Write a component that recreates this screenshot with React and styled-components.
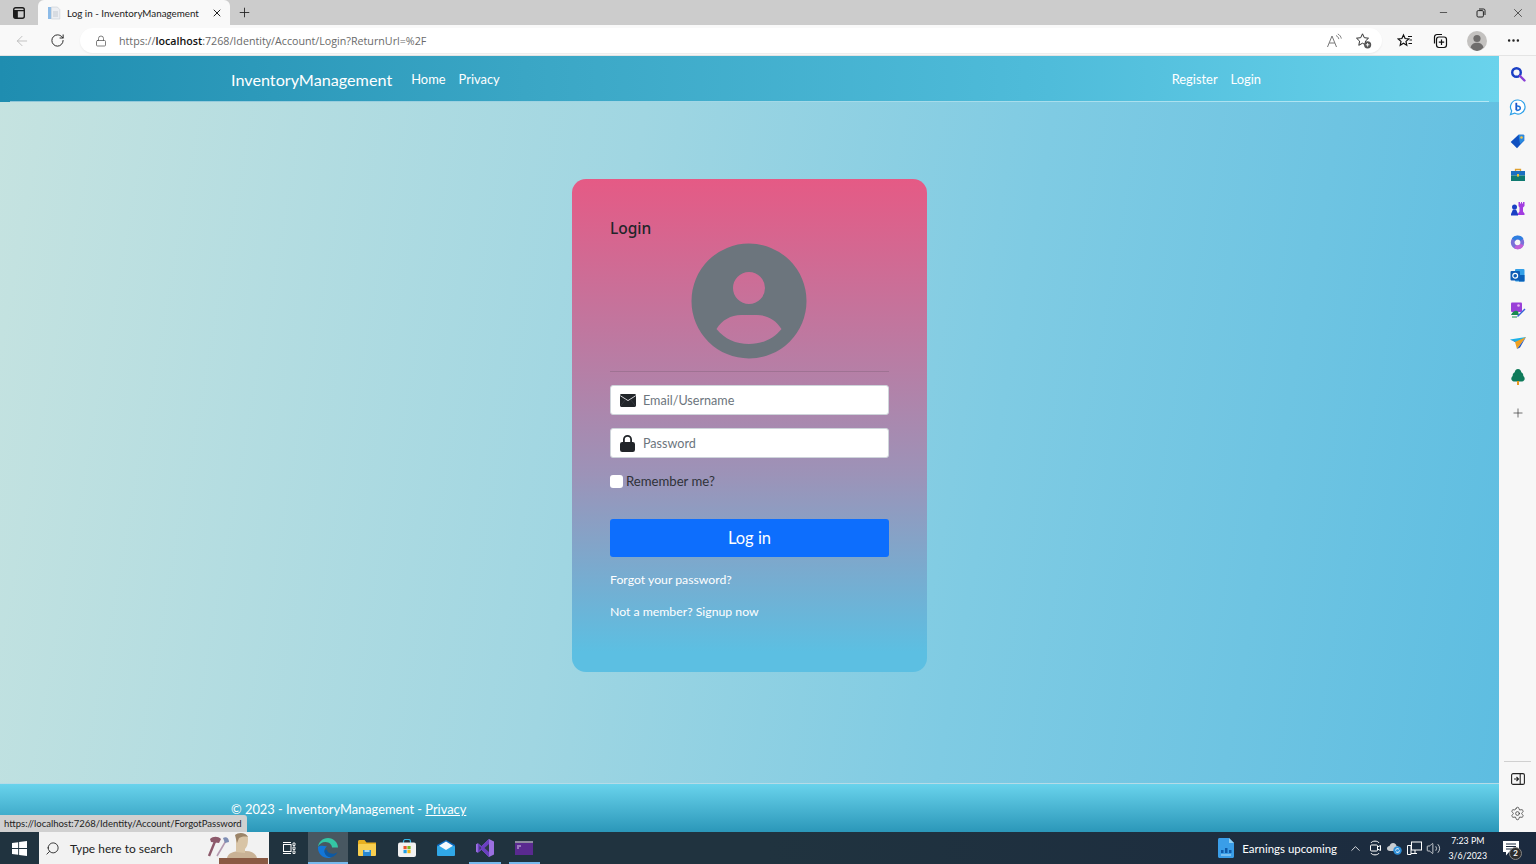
import React from "react";
import styled, { createGlobalStyle } from "styled-components";
import {
  ArrowLeft,
  RotateCw,
  Lock,
  X,
  Plus,
  Minus,
  Search,
  Settings,
  Ellipsis,
  ChevronUp,
  Volume2,
} from "lucide-react";

const GlobalStyle = createGlobalStyle`
  html, body { margin: 0; padding: 0; height: 100%; overflow: hidden; }
  body { font-family: Lato, "Open Sans", sans-serif; color: #212529; }
  * { box-sizing: border-box; }
`;

/* ---------- Drawings ---------- */

const TabActionsIcon = () => (
  <svg width="14" height="14" viewBox="0 0 14 14" fill="none" stroke="#1c1c1c" strokeWidth="1.4">
    <rect x="1.7" y="1.7" width="10.6" height="10.6" rx="2" />
    <path d="M2 4.6h10M5 4.6v7.4" />
    <path d="M2.4 5h2.4v6.6H2.4z" fill="#1c1c1c" />
  </svg>
);

const PageIcon = () => (
  <svg width="14" height="14" viewBox="0 0 14 14">
    <rect x="1" y="1" width="3.4" height="12" fill="#8cbbe8" />
    <path d="M4.4 1h6l2.4 2.6V13H4.4z" fill="#eceef2" stroke="#c8ccd4" strokeWidth=".6" />
    <path d="M6 6h5M6 8h5M6 10h5" stroke="#b9bec8" strokeWidth=".8" />
  </svg>
);

const RestoreIcon = () => (
  <svg width="10" height="10" viewBox="0 0 10 10" fill="none" stroke="#222" strokeWidth="1">
    <rect x="1" y="2.6" width="6.4" height="6.4" rx="1.2" />
    <path d="M3 1h4.6A1.4 1.4 0 0 1 9 2.4V7" />
  </svg>
);

const ReadAloudIcon = () => (
  <svg width="16" height="16" viewBox="0 0 16 16" fill="none" stroke="#777" strokeWidth="1">
    <path d="M1.500 14 6 3l4.500 11M3.200 10h5.600" />
    <path d="M10 2.500c1.600.8 2.500 2 2.800 3.600M11.800 1c2 1 3.200 2.600 3.500 4.600" strokeWidth=".9" />
  </svg>
);

const FavoriteAddIcon = () => (
  <svg width="17" height="17" viewBox="0 0 17 17" fill="none">
    <path d="M7.500 1.800 9.300 5.700l4.200.5-3.100 2.900.8 4.200-3.700-2.100-3.700 2.100.8-4.200-3.100-2.900 4.200-.5z" stroke="#333" strokeWidth="1" />
    <circle cx="12.600" cy="12.800" r="3.600" fill="#555" />
    <path d="M12.600 11v3.600M10.800 12.800h3.600" stroke="#fff" strokeWidth=".9" />
  </svg>
);

const FavoritesIcon = () => (
  <svg width="16" height="16" viewBox="0 0 16 16" fill="none" stroke="#111" strokeWidth="1.200">
    <path d="M6.500 2 8.100 5.500l3.700.4-2.800 2.500.8 3.800-3.300-1.900-3.300 1.900.8-3.800L1.200 5.900l3.700-.4z" />
    <path d="M11 3.500h4M12.500 7h2.500M11.500 10.500h3.500" />
  </svg>
);

const CollectionsIcon = () => (
  <svg width="16" height="16" viewBox="0 0 16 16" fill="none" stroke="#111" strokeWidth="1.200">
    <path d="M2.500 10.500V4A2.500 2.500 0 0 1 5 1.500h5" />
    <rect x="4.500" y="4" width="10" height="10.500" rx="2.400" />
    <path d="M9.500 6.500v5.500M6.800 9.200h5.400" />
  </svg>
);

const ProfileIcon = () => (
  <svg width="20" height="20" viewBox="0 0 20 20">
    <circle cx="10" cy="10" r="10" fill="#c4c2c0" />
    <circle cx="10" cy="7.500" r="3.600" fill="#6f6d6c" />
    <path d="M3.500 16.500C4.500 13 7 11.800 10 11.800s5.500 1.200 6.500 4.700A10 10 0 0 1 10 20a10 10 0 0 1-6.500-3.500z" fill="#6f6d6c" />
  </svg>
);

const AvatarIcon = () => (
  <svg width="116" height="116" viewBox="0 0 116 116">
    <path
      fillRule="evenodd"
      fill="#6c757d"
      d="M58 .5a57.500 57.500 0 1 0 0 115a57.500 57.500 0 1 0 0-115z
         M58 29a16 16 0 1 1 0 32a16 16 0 1 1 0-32z
         M25.500 86C31 77 40 72 50 72h16c10 0 19 5 24.500 14c-8 10-19.500 15-32.500 15s-24.500-5-32.500-15z"
    />
  </svg>
);

const EnvelopeIcon = () => (
  <svg width="16" height="13" viewBox="0 0 16 13">
    <rect width="16" height="13" rx="1.400" fill="#212529" />
    <path d="M.3 1.700 8 6.600l7.700-4.900" fill="none" stroke="#e8e4ea" strokeWidth=".9" />
    <path d="M.3 12.300 5.600 5.300M15.700 12.300 10.400 5.300" fill="none" stroke="#4a4d55" strokeWidth=".5" />
  </svg>
);

const LockIcon = () => (
  <svg width="15" height="17" viewBox="0 0 15 17">
    <path fillRule="evenodd" fill="#212529" d="M7.500 0A4.500 4.500 0 0 0 3 4.500V7h-.8A2.200 2.200 0 0 0 0 9.200v5.600A2.200 2.200 0 0 0 2.200 17h10.600a2.200 2.200 0 0 0 2.200-2.200V9.200A2.200 2.200 0 0 0 12.800 7H12V4.500A4.500 4.500 0 0 0 7.500 0zm0 1.800A2.700 2.700 0 0 1 10.200 4.500V7H4.800V4.500A2.700 2.700 0 0 1 7.500 1.800z" />
  </svg>
);

/* Edge sidebar apps */
const SideSearch = () => (
  <svg width="16" height="16" viewBox="0 0 16 16" fill="none">
    <circle cx="6.500" cy="6.500" r="4.300" stroke="#1a3fc4" strokeWidth="2.400" />
    <path d="m10 10 4.500 4.500" stroke="#8a3fd6" strokeWidth="2.400" strokeLinecap="round" />
  </svg>
);

const SideBing = () => (
  <svg width="17" height="17" viewBox="0 0 17 17" fill="none">
    <path d="M9 1a7 7 0 1 1-3.400 13.100L1.500 15.500l1.200-3.600A7 7 0 0 1 9 1z" stroke="#2b9fe8" strokeWidth="1.200" fill="#fff" />
    <path d="M7.300 3.800v7.400" stroke="#1a50c8" strokeWidth="1.800" />
    <path d="M7.300 7.200c2.800-.4 4 .6 4 1.800 0 1.400-1.800 2.400-4 2.400" stroke="#1a70d8" strokeWidth="1.500" />
  </svg>
);

const SideTag = () => (
  <svg width="15" height="15" viewBox="0 0 15 15">
    <path d="M8.500.8h5c.4 0 .7.300.7.700v5L7 14.300.7 8z" fill="#1050c0" />
    <path d="M8.500.8h5c.4 0 .7.300.7.700v5L10 10z" fill="#2a8ae0" />
    <circle cx="11.500" cy="3.500" r="1.300" fill="#f6c244" />
  </svg>
);

const SideBag = () => (
  <svg width="14" height="13" viewBox="0 0 14 13">
    <path d="M4.500 3V1.500h5V3" fill="none" stroke="#e0a030" strokeWidth="1.300" />
    <rect y="3" width="14" height="4.500" fill="#1b6fc0" />
    <rect y="7.500" width="14" height="5.500" fill="#0f7a70" />
    <rect x="6" y="6" width="2" height="2.600" fill="#f2c230" />
  </svg>
);

const SideChess = () => (
  <svg width="15" height="15" viewBox="0 0 15 15">
    <path d="M8.500 1h1.500v1.500h1V1h1v1.500h1V1H14.500v4L13 6.500v4l1.500 2V14H8v-1.500l1.500-2v-4L8.500 5z" fill="#a23de0" />
    <circle cx="4.500" cy="6" r="2.500" fill="#1a3fc4" />
    <path d="M3 8.500h3l2 4.500v1.500H1V13z" fill="#1a3fc4" />
  </svg>
);

const SideOffice = () => (
  <svg width="15" height="15" viewBox="0 0 15 15" fill="none">
    <circle cx="7.500" cy="7.500" r="4.800" stroke="#7a70d8" strokeWidth="3.800" />
    <path d="M3.500 4.800a4.800 4.800 0 0 1 8.300 0" stroke="#2f7fe0" strokeWidth="3.800" />
    <path d="M12 9.500a4.800 4.800 0 0 1-6.800 2.200" stroke="#c060d8" strokeWidth="3.800" />
    <circle cx="7.500" cy="7.500" r="1.800" fill="#f7f7f7" />
  </svg>
);

const SideOutlook = () => (
  <svg width="15" height="15" viewBox="0 0 15 15">
    <rect x="5" y="1" width="9.500" height="12.500" rx="1" fill="#33a0e8" />
    <rect x="9" y="7" width="5.500" height="6.500" fill="#0a60b8" />
    <rect x=".5" y="3" width="9.500" height="9.500" rx="1" fill="#0f5cb5" />
    <circle cx="5.200" cy="7.700" r="2.400" fill="none" stroke="#fff" strokeWidth="1.200" />
  </svg>
);

const SideDesigner = () => (
  <svg width="16" height="16" viewBox="0 0 16 16">
    <rect x="1" y="0.500" width="11" height="9.500" rx="1" fill="#9a3fd8" />
    <circle cx="8.500" cy="3.500" r="1.300" fill="#e8b8f0" />
    <path d="M1 13c2-4 5-5 7-3.500l1 3.500z" fill="#1a8a50" />
    <path d="m7 14 7.500-7.500 1 1L8 15z" fill="#3460d8" />
    <path d="M2 15h5" stroke="#1a8a50" strokeWidth="1" />
  </svg>
);

const SideSend = () => (
  <svg width="16" height="13" viewBox="0 0 16 13">
    <path d="M0 2.500 16 0 9 6z" fill="#1cb2e8" />
    <path d="M16 0 5 5l2 7z" fill="#f0a020" />
    <path d="M16 0 7 12l3-1.500z" fill="#1a50c0" />
    <path d="M0 2.500 5 5l1-.5z" fill="#1070b8" />
  </svg>
);

const SideTree = () => (
  <svg width="14" height="16" viewBox="0 0 14 16">
    <path d="M7 0c2 0 3 1.500 3.300 3.200C12 4 12.500 5.500 12.300 7c1.200 1 1.700 2.500 1.200 3.700-.6 1.300-2 1.800-3.500 1.800H4c-1.500 0-2.900-.5-3.500-1.800C0 9.500.5 8 1.700 7 1.500 5.500 2 4 3.700 3.200 4 1.500 5 0 7 0z" fill="#0f7a5a" />
    <rect x="6" y="12" width="2" height="4" fill="#e89a20" />
  </svg>
);

const SplitIcon = () => (
  <svg width="14" height="12" viewBox="0 0 14 12" fill="none" stroke="#222" strokeWidth="1.100">
    <rect x=".6" y=".6" width="12.800" height="10.800" rx="1.500" />
    <path d="M9.200 .6v10.800M3 6h4M5.500 4l2 2-2 2" />
  </svg>
);

/* Taskbar */
const WindowsLogo = () => (
  <svg width="15" height="15" viewBox="0 0 15 15" fill="#fff">
    <path d="M0 2.100 6.200 1.200v5.900H0zM7.100 1.100 15 0v7.100H7.100zM0 7.900h6.200v5.900L0 12.900zM7.100 7.900H15V15l-7.900-1.100z" />
  </svg>
);

const StatueArt = () => (
  <svg width="62" height="32" viewBox="0 0 62 32">
    <path d="M2 24 9 7" stroke="#8d5a6b" strokeWidth="2.400" />
    <path d="M3 7c3-3 8-3 11 0l-2 4-8-1z" fill="#8d5a6b" />
    <path d="M10 24 20 7" stroke="#b49ab0" strokeWidth="1.600" />
    <path d="M16 6c3-2 6 0 6 4l-4 1z" fill="#7e8eb4" />
    <rect x="12" y="26" width="49" height="6" fill="#8a5a44" />
    <path d="M20 26c1-5 7-7 13-7h6c6 0 10 3 11 7z" fill="#c9b296" />
    <path d="M29 20V6c0-3 2-4 6-4s6 1 6 5c0 5-1 8-3 10v4z" fill="#d8c4a6" />
    <path d="M28 3c3-3 11-3 13 2-4-1-7 0-9 1l-2 5z" fill="#9b8468" />
  </svg>
);

const TaskViewIcon = () => (
  <svg width="14" height="14" viewBox="0 0 14 14" fill="none" stroke="#fff" strokeWidth="1">
    <path d="M1 1.500h8M1 12.500h8" />
    <rect x="1.500" y="3.500" width="7.500" height="7" />
    <path d="M11 2v2.500h2V2zM11 6v2.500h2V6zM11 10v2.500h2V10z" strokeWidth=".9" />
  </svg>
);

const EdgeIcon = () => (
  <svg width="20" height="20" viewBox="0 0 20 20">
    <path d="M10 0C4.500 0 .5 4 0 9c1-3 4-5 7.500-5C11.500 4 14 7 14 9.500h6C20 4.500 15.500 0 10 0z" fill="#34c6a4" />
    <path d="M0 9c-.5 6 4 11 10 11 1.500 0 3-.3 4-.8-4.500.5-7.500-3-7.500-6.200 0-2 1-3.500 2.500-4.500C5 7.500 1.500 7.500 0 9z" fill="#1276d8" />
    <path d="M6.500 13c0 3.500 3.500 7.500 8.500 5.700 2-1 3.500-2.500 4.500-4.700-2 2-5.500 2.200-8 1-2-1-2.500-2-2.500-3.500-1.500.3-2.500 1-2.500 1.500z" fill="#0c59a4" />
  </svg>
);

const ExplorerIcon = () => (
  <svg width="18" height="16" viewBox="0 0 18 16">
    <path d="M0 1.500C0 .7.700 0 1.500 0h5l2 2.500H18V5H0z" fill="#e8b020" />
    <rect y="4" width="18" height="12" rx="1" fill="#f8cf50" />
    <rect x="5" y="10" width="8" height="6" fill="#2a88d0" />
    <rect x="6.500" y="10" width="5" height="2" fill="#a8d8f0" />
  </svg>
);

const StoreIcon = () => (
  <svg width="18" height="18" viewBox="0 0 18 18">
    <path d="M5.500 4V2.500a2 2 0 0 1 2-2h3a2 2 0 0 1 2 2V4" fill="none" stroke="#35b8e8" strokeWidth="1.200" />
    <rect y="3.500" width="18" height="14.500" rx="2" fill="#f2f2f2" />
    <rect x="5.500" y="7" width="3.200" height="3.200" fill="#e8542c" />
    <rect x="9.400" y="7" width="3.200" height="3.200" fill="#7ab820" />
    <rect x="5.500" y="11" width="3.200" height="3.200" fill="#20a0e8" />
    <rect x="9.400" y="11" width="3.200" height="3.200" fill="#f2b818" />
  </svg>
);

const MailIcon = () => (
  <svg width="18" height="16" viewBox="0 0 18 16">
    <path d="M0 5 9 0l9 5v2L9 11 0 7z" fill="#0c6cc0" />
    <rect y="6" width="18" height="10" rx="1" fill="#30a8e8" />
    <path d="M2 5.800 9 1.500l7 4.300-7 4.200z" fill="#f4f8fc" />
  </svg>
);

const VsIcon = () => (
  <svg width="18" height="18" viewBox="0 0 18 18">
    <path d="M13 0 18 2.500v13L13 18 5.500 10.800 1.800 13.800 0 12.800V5.200l1.800-1 3.700 3z" fill="#9a6fe0" />
    <path d="M13 0v18L5.500 10.800 1.800 13.800V4.200l3.700 3z" fill="#6a3fc0" />
    <path d="M13 5 8.500 9l4.500 4zM3.500 7v4L5 9z" fill="#2b3a44" />
  </svg>
);

const TerminalIcon = () => (
  <svg width="18" height="14" viewBox="0 0 18 14">
    <rect width="18" height="14" fill="#5a2a90" />
    <rect width="18" height="2" fill="#8d8aa0" />
    <path d="M2 5h4M2 7h2" stroke="#d9c8ec" strokeWidth="1" />
  </svg>
);

const NewsIcon = () => (
  <svg width="16" height="20" viewBox="0 0 16 20">
    <path d="M1.500 0H11l5 5v13.500c0 .8-.7 1.500-1.500 1.500h-13C.700 20 0 19.300 0 18.500v-17C0 .7.700 0 1.500 0z" fill="#3a9ee8" />
    <path d="M11 0l5 5h-5z" fill="#8fd0f4" />
    <path d="M3 12v3h2.500v-3zM7 10v5h2.500v-5zM11 12v3h2.500v-3z" fill="#0f5aa8" />
    <path d="M3 17h10" stroke="#b8e0f8" strokeWidth="1" />
  </svg>
);

const MeetIcon = () => (
  <svg width="13" height="16" viewBox="0 0 13 16" fill="none" stroke="#fff" strokeWidth="1">
    <path d="M2 3c1-2.500 7-2.500 8 0M2 13c1 2.500 7 2.500 8 0" />
    <rect x="1.500" y="5" width="7" height="6" rx="1" />
    <path d="m8.500 7 3-1.500v5l-3-1.500" />
  </svg>
);

const CloudSyncIcon = () => (
  <svg width="15" height="13" viewBox="0 0 15 13">
    <path d="M3 9C1 9 0 8 0 6.500S1.200 4 2.500 4C3 2 4.500 1 6 1c2 0 3.500 1.500 3.500 3H11v5z" fill="#c8ccd0" />
    <circle cx="10.500" cy="8.500" r="4.200" fill="#2f8fd8" />
    <path d="M8.500 8.500a2 2 0 0 1 3.500-1.200M12.500 8.500a2 2 0 0 1-3.500 1.200" stroke="#fff" strokeWidth=".9" fill="none" />
  </svg>
);

const NetworkIcon = () => (
  <svg width="15" height="15" viewBox="0 0 15 15" fill="none" stroke="#fff" strokeWidth="1">
    <rect x="4.500" y="1" width="10" height="8" />
    <path d="M.5 4.500h3.500v9H.5zM4 12.500h6M8 9v3.500" />
  </svg>
);

const MessageIcon = () => (
  <svg width="16" height="15" viewBox="0 0 16 15">
    <path d="M0 0h16v11H6l-3 3.500V11H0z" fill="#fff" />
    <path d="M3 3h10M3 5.500h10M3 8h7" stroke="#1b2a3f" strokeWidth="1" />
  </svg>
);

/* ---------- Browser chrome ---------- */

const Screen = styled.div`
  width: 1536px;
  height: 864px;
  display: flex;
  flex-direction: column;
  overflow: hidden;
  position: relative;
`;

const TitleBar = styled.div`
  height: 25px;
  flex: none;
  display: flex;
  align-items: flex-end;
  background: #cccccc;
  padding-left: 12px;
`;

const TabActions = styled.div`
  width: 14px;
  height: 25px;
  margin-right: 12px;
  display: flex;
  align-items: center;
`;

const Tab = styled.div`
  width: 192px;
  height: 25px;
  display: flex;
  align-items: center;
  padding: 0 7px 0 9px;
  background: #f9f9f9;
  border-radius: 6px 6px 0 0;
`;

const TabTitle = styled.span`
  flex: 1;
  margin-left: 6px;
  font-size: 9.800px;
  color: #222;
  white-space: nowrap;
`;

const NewTab = styled.div`
  width: 28px;
  height: 25px;
  display: flex;
  align-items: center;
  justify-content: center;
  color: #222;
`;

const WindowControls = styled.div`
  margin-left: auto;
  height: 25px;
  display: flex;
  align-items: center;
`;

const WindowButton = styled.div`
  width: 37px;
  display: flex;
  justify-content: center;
  align-items: center;
  color: #222;
`;

const Toolbar = styled.div`
  height: 31px;
  flex: none;
  display: flex;
  align-items: center;
  background: #f9f9f9;
  border-bottom: 1px solid #e4e4e4;
  padding: 1px 0 0 13px;
`;

const NavIcon = styled.div`
  width: 18px;
  display: flex;
  justify-content: center;
  color: ${(p) => (p.$off ? "#b8b8b8" : "#2a2a2a")};
  margin-right: ${(p) => p.$gap || 0}px;
`;

const AddressBar = styled.div`
  width: 1302px;
  height: 25px;
  display: flex;
  align-items: center;
  background: #fff;
  border-radius: 13px;
  padding: 0 10px 0 15px;
  box-shadow: 0 1px 2px rgba(0, 0, 0, 0.06);
`;

const Url = styled.div`
  flex: 1;
  margin-left: 12px;
  font-size: 10.700px;
  color: #6a6a6a;
  font-family: "Open Sans", sans-serif;
  b {
    color: #111;
    font-weight: 600;
  }
`;

const AddressTools = styled.div`
  display: flex;
  align-items: center;
  gap: 13px;
`;

const ToolbarRight = styled.div`
  display: flex;
  flex: 1;
  align-items: center;
  justify-content: space-between;
  padding: 0 15px 0 15px;
`;

/* ---------- Page ---------- */

const Main = styled.div`
  flex: 1;
  min-height: 0;
  display: flex;
`;

const Page = styled.div`
  width: 1499px;
  display: flex;
  flex-direction: column;
  background: linear-gradient(100deg, #c6e3e0 0%, #a0d6e2 40%, #7fcbe3 65%, #5dbde1 100%);
`;

const NavBar = styled.nav`
  height: 46px;
  flex: none;
  display: flex;
  align-items: center;
  position: relative;
  padding: 0 238px 0 231px;
  color: #fff;
  background: linear-gradient(90deg, #1f8db0 0%, #3aa6c5 35%, #4fbcda 70%, #6ad3ec 100%);
  &::after {
    content: "";
    position: absolute;
    left: 10px;
    right: 10px;
    bottom: 0;
    height: 1px;
    background: rgba(255, 255, 255, 0.5);
  }
`;

const Brand = styled.a`
  font-size: 16.200px;
  margin-right: 19px;
`;

const NavLink = styled.a`
  font-size: 12.900px;
  margin-right: 13px;
  &:last-child {
    margin-right: 0;
  }
`;

const NavSpacer = styled.div`
  flex: 1;
`;

const Content = styled.main`
  flex: 1;
  min-height: 0;
  display: flex;
  justify-content: center;
  padding: 77px 0 0 0;
`;

const Card = styled.section`
  width: 355px;
  height: 493px;
  padding: 38px 38px 0;
  border-radius: 14px;
  background: linear-gradient(180deg, #e55a85 0%, #9c93b8 60%, #5cbfe2 96%);
  display: flex;
  flex-direction: column;
`;

const CardTitle = styled.h1`
  margin: 0;
  font-family: "Noto Sans", sans-serif;
  font-size: 15.500px;
  line-height: 22px;
  font-weight: 500;
  color: #212529;
`;

const AvatarWrap = styled.div`
  display: flex;
  justify-content: center;
  margin-top: 4px;
  height: 116px;
  padding-right: 1px;
`;

const Divider = styled.hr`
  width: 100%;
  margin: 12px 0 13px;
  border: 0;
  border-top: 1px solid rgba(33, 37, 41, 0.15);
`;

const InputBox = styled.label`
  height: 30px;
  display: flex;
  align-items: center;
  background: #fff;
  border: 1px solid #ced4da;
  border-radius: 3px;
  padding-left: 9px;
  margin-bottom: 13px;
`;

const InputIcon = styled.span`
  width: 16px;
  display: flex;
  justify-content: flex-start;
  margin-right: 7px;
`;

const Placeholder = styled.span`
  font-size: 12.600px;
  color: #6c757d;
`;

const RememberRow = styled.div`
  display: flex;
  align-items: center;
  height: 18px;
  margin-top: 1px;
`;

const CheckBox = styled.span`
  width: 13px;
  height: 13px;
  background: #fff;
  border: 1px solid rgba(255, 255, 255, 0.5);
  border-radius: 3px;
  margin-right: 3px;
`;

const RememberLabel = styled.span`
  font-size: 13.150px;
  color: #2f3238;
`;

const LoginButton = styled.button`
  height: 38px;
  margin-top: 29px;
  border: 0;
  border-radius: 3px;
  background: #0d6efd;
  color: #fff;
  font-family: inherit;
  font-size: 16.500px;
  padding-top: 1px;
`;

const CardLink = styled.a`
  display: block;
  font-size: 12.250px;
  line-height: 18px;
  color: #fff;
  margin-top: 14px;
`;

const Footer = styled.footer`
  height: 49px;
  flex: none;
  padding: 16px 0 0 231px;
  border-top: 1px solid rgba(255, 255, 255, 0.65);
  background: linear-gradient(180deg, #69d3ec 0%, #2b97b9 100%);
  color: #fff;
  font-size: 12.850px;
  line-height: 18px;
  a {
    color: #fff;
    text-decoration: underline;
  }
`;

const StatusTip = styled.div`
  position: absolute;
  left: 0;
  bottom: 32px;
  height: 17px;
  padding: 0 5px 0 4px;
  background: #d0d0d0;
  border-radius: 0 3px 0 0;
  color: #222;
  font-size: 9.500px;
  line-height: 17px;
`;

/* ---------- Edge sidebar ---------- */

const SideBar = styled.aside`
  flex: 1;
  background: #f7f7f7;
  display: flex;
  flex-direction: column;
  padding-top: 1px;
`;

const SideItem = styled.div`
  height: 33.700px;
  flex: none;
  display: flex;
  align-items: center;
  justify-content: center;
  color: #333;
  margin-top: ${(p) => p.$top || 0}px;
`;

const SideBottom = styled.div`
  margin-top: auto;
  padding-bottom: 2px;
`;

const SideRule = styled.div`
  height: 1px;
  margin: 0 5px 1px;
  background: #d0d0d0;
`;

/* ---------- Taskbar ---------- */

const Taskbar = styled.div`
  height: 32px;
  flex: none;
  display: flex;
  align-items: center;
  background: linear-gradient(90deg, #20333f 0%, #20333f 50%, #1b2a3f 100%);
  color: #fff;
`;

const StartButton = styled.div`
  width: 39px;
  display: flex;
  justify-content: center;
`;

const SearchBox = styled.div`
  width: 230px;
  height: 32px;
  display: flex;
  align-items: center;
  background: #f2f2f2;
  padding-left: 6px;
  color: #222;
`;

const SearchText = styled.span`
  flex: 1;
  margin-left: 10px;
  font-size: 11.950px;
`;

const TaskApps = styled.div`
  display: flex;
  align-items: center;
`;

const TaskApp = styled.div`
  width: 39.300px;
  height: 32px;
  display: flex;
  align-items: center;
  justify-content: center;
  position: relative;
  background: ${(p) => (p.$active ? "rgba(255,255,255,0.18)" : "transparent")};
  ${(p) =>
    p.$running &&
    `&::after {
      content: "";
      position: absolute;
      left: ${p.$active ? 0 : 4}px;
      right: ${p.$active ? 0 : 4}px;
      bottom: 0;
      height: 2px;
      background: #76b9ed;
    }`}
`;

const Tray = styled.div`
  margin-left: auto;
  display: flex;
  align-items: center;
  padding-right: 6px;
`;

const NewsWidget = styled.div`
  display: flex;
  align-items: center;
  gap: 8px;
  margin-right: 9px;
  font-size: 11.450px;
`;

const TrayIcon = styled.div`
  width: 19.500px;
  display: flex;
  justify-content: center;
`;

const Clock = styled.div`
  width: 48.500px;
  text-align: center;
  font-size: 8.800px;
  line-height: 15px;
`;

const Notify = styled.div`
  width: 38px;
  height: 32px;
  display: flex;
  align-items: center;
  justify-content: center;
  position: relative;
`;

const NotifyBadge = styled.span`
  position: absolute;
  right: 8px;
  bottom: 4px;
  width: 13px;
  height: 13px;
  border-radius: 50%;
  background: #2d2d2d;
  border: 1px solid #888;
  font-size: 8px;
  line-height: 11px;
  text-align: center;
  font-weight: 700;
`;

const sideApps = [SideSearch, SideBing, SideTag, SideBag, SideChess, SideOffice, SideOutlook, SideDesigner, SideSend, SideTree];
const taskApps = [
  { Icon: TaskViewIcon },
  { Icon: EdgeIcon, active: true, running: true },
  { Icon: ExplorerIcon },
  { Icon: StoreIcon },
  { Icon: MailIcon },
  { Icon: VsIcon, running: true },
  { Icon: TerminalIcon, running: true },
];

const App = () => {
  return (
    <Screen>
      <GlobalStyle />
      <TitleBar>
        <TabActions>
          <TabActionsIcon />
        </TabActions>
        <Tab>
          <PageIcon />
          <TabTitle>Log in - InventoryManagement</TabTitle>
          <X size={12} color="#222" />
        </Tab>
        <NewTab>
          <Plus size={15} strokeWidth={1.4} />
        </NewTab>
        <WindowControls>
          <WindowButton>
            <Minus size={11} strokeWidth={1.5} />
          </WindowButton>
          <WindowButton>
            <RestoreIcon />
          </WindowButton>
          <WindowButton>
            <X size={14} strokeWidth={1.2} />
          </WindowButton>
        </WindowControls>
      </TitleBar>

      <Toolbar>
        <NavIcon $off $gap={17}>
          <ArrowLeft size={16} strokeWidth={1.3} />
        </NavIcon>
        <NavIcon $gap={14}>
          <RotateCw size={15} strokeWidth={1.6} />
        </NavIcon>
        <AddressBar>
          <Lock size={12} color="#555" strokeWidth={1.5} />
          <Url>
            https://<b>localhost</b>:7268/Identity/Account/Login?ReturnUrl=%2F
          </Url>
          <AddressTools>
            <ReadAloudIcon />
            <FavoriteAddIcon />
          </AddressTools>
        </AddressBar>
        <ToolbarRight>
          <FavoritesIcon />
          <CollectionsIcon />
          <ProfileIcon />
          <Ellipsis size={15} color="#222" />
        </ToolbarRight>
      </Toolbar>

      <Main>
        <Page>
          <NavBar>
            <Brand>InventoryManagement</Brand>
            <NavLink>Home</NavLink>
            <NavLink>Privacy</NavLink>
            <NavSpacer />
            <NavLink>Register</NavLink>
            <NavLink>Login</NavLink>
          </NavBar>

          <Content>
            <Card>
              <CardTitle>Login</CardTitle>
              <AvatarWrap>
                <AvatarIcon />
              </AvatarWrap>
              <Divider />
              <InputBox>
                <InputIcon>
                  <EnvelopeIcon />
                </InputIcon>
                <Placeholder>Email/Username</Placeholder>
              </InputBox>
              <InputBox>
                <InputIcon>
                  <LockIcon />
                </InputIcon>
                <Placeholder>Password</Placeholder>
              </InputBox>
              <RememberRow>
                <CheckBox />
                <RememberLabel>Remember me?</RememberLabel>
              </RememberRow>
              <LoginButton>Log in</LoginButton>
              <CardLink>Forgot your password?</CardLink>
              <CardLink>Not a member? Signup now</CardLink>
            </Card>
          </Content>

          <Footer>
            © 2023 - InventoryManagement - <a>Privacy</a>
          </Footer>
        </Page>

        <SideBar>
          {sideApps.map((Icon, i) => (
            <SideItem key={i}>
              <Icon />
            </SideItem>
          ))}
          <SideItem $top={2}>
            <Plus size={14} strokeWidth={1.2} />
          </SideItem>
          <SideBottom>
            <SideRule />
            <SideItem>
              <SplitIcon />
            </SideItem>
            <SideItem>
              <Settings size={15} strokeWidth={1.2} />
            </SideItem>
          </SideBottom>
        </SideBar>
      </Main>

      <StatusTip>https://localhost:7268/Identity/Account/ForgotPassword</StatusTip>

      <Taskbar>
        <StartButton>
          <WindowsLogo />
        </StartButton>
        <SearchBox>
          <Search size={15} strokeWidth={1.4} style={{ transform: "scaleX(-1)" }} />
          <SearchText>Type here to search</SearchText>
          <StatueArt />
        </SearchBox>
        <TaskApps>
          {taskApps.map(({ Icon, active, running }, i) => (
            <TaskApp key={i} $active={active} $running={running}>
              <Icon />
            </TaskApp>
          ))}
        </TaskApps>
        <Tray>
          <NewsWidget>
            <NewsIcon />
            Earnings upcoming
          </NewsWidget>
          <TrayIcon>
            <ChevronUp size={15} strokeWidth={1.3} />
          </TrayIcon>
          <TrayIcon>
            <MeetIcon />
          </TrayIcon>
          <TrayIcon>
            <CloudSyncIcon />
          </TrayIcon>
          <TrayIcon>
            <NetworkIcon />
          </TrayIcon>
          <TrayIcon>
            <Volume2 size={15} strokeWidth={1.2} />
          </TrayIcon>
          <Clock>
            7:23 PM
            <br />
            3/6/2023
          </Clock>
          <Notify>
            <MessageIcon />
            <NotifyBadge>2</NotifyBadge>
          </Notify>
        </Tray>
      </Taskbar>
    </Screen>
  );
};

export default App;
